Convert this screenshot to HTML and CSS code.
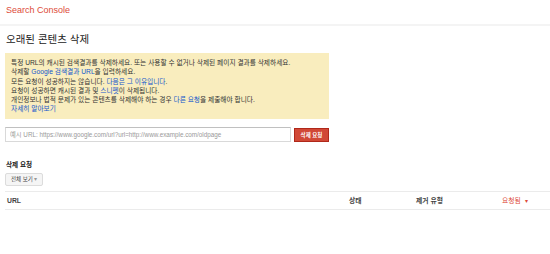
FILE: index.html
```html
<!DOCTYPE html>
<html lang="ko">
<head>
  <meta charset="UTF-8">
  <title>오래된 콘텐츠 삭제 - Search Console</title>
  <link rel="stylesheet" href="styles.css">
</head>
<body>
  <header class="top-bar">
    <span class="brand">Search Console</span>
  </header>

  <section class="page">
    <h1 class="page-title">오래된 콘텐츠 삭제</h1>

    <div class="notice">
      <p>특정 URL의 캐시된 검색결과를 삭제하세요. 또는 사용할 수 없거나 삭제된 페이지 결과를 삭제하세요.</p>
      <p>삭제할 <a href="#">Google 검색결과 URL</a>을 입력하세요.</p>
      <p>모든 요청이 성공하지는 않습니다. <a href="#">다음은 그 이유입니다</a>.</p>
      <p>요청이 성공하면 캐시된 결과 및 <a href="#">스니펫</a>이 삭제됩니다.</p>
      <p>개인정보나 법적 문제가 있는 콘텐츠를 삭제해야 하는 경우 <a href="#">다른 요청</a>을 제출해야 합니다.</p>
      <p><a href="#">자세히 알아보기</a></p>
    </div>

    <form class="request-form">
      <input type="text" class="url-input" placeholder="예시 URL: https://www.google.com/url?url=http://www.example.com/oldpage">
      <button type="submit" class="btn-red">삭제 요청</button>
    </form>

    <h2 class="section-title">삭제 요청</h2>
    <button type="button" class="btn-filter">전체 보기 <span class="caret">▾</span></button>

    <div class="table-head">
      <span class="col-url">URL</span>
      <span class="col-status">상태</span>
      <span class="col-type">제거 유형</span>
      <span class="col-date">요청됨 <span class="sort">▾</span></span>
    </div>
  </section>
</body>
</html>
```

FILE: styles.css
```css
/* Search Console - remove outdated content */
body {
  margin: 0;
  font-family: "Liberation Sans", Arial, "Noto Sans CJK KR", sans-serif;
  color: #222;
  background: #fff;
}

.top-bar {
  height: 24px;
  padding: 0 6px;
  display: flex;
  align-items: center;
  border-bottom: 2px solid #f4f4f4;
}

.brand {
  color: #dd4b39;
  font-size: 9px;
  margin-top: -4px;
}

.page {
  padding: 0 0 0 5px;
}

.page-title {
  font-size: 10.5px;
  font-weight: normal;
  margin: 6px 0 0 1px;
  line-height: 14px;
}

.notice {
  width: 312px;
  margin-top: 7px;
  padding: 5px 6px 5px 6px;
  background: #f9edbe;
  font-size: 6.7px;
  line-height: 9.3px;
  color: #333;
}

.notice p {
  margin: 0;
}

.notice a {
  color: #1155cc;
  text-decoration: none;
}

.request-form {
  display: flex;
  margin-top: 8px;
  gap: 3px;
}

.url-input {
  width: 286px;
  height: 15px;
  padding: 0 4px;
  box-sizing: border-box;
  border: 1px solid #d9d9d9;
  border-top-color: #c0c0c0;
  font-family: inherit;
  font-size: 6.3px;
  color: #333;
}

.url-input::placeholder {
  color: #999;
}

.btn-red {
  width: 35px;
  height: 14px;
  margin-top: 1px;
  padding: 0;
  border: 1px solid #b0281a;
  background: #d14836;
  color: #fff;
  font-family: inherit;
  font-size: 5.5px;
  font-weight: bold;
}

.section-title {
  font-size: 6.6px;
  font-weight: bold;
  margin: 18px 0 0 1px;
  line-height: 9px;
}

.btn-filter {
  display: block;
  margin-top: 4px;
  height: 13px;
  padding: 0 5px;
  border: 1px solid #dcdcdc;
  border-radius: 2px;
  background: #f5f5f5;
  color: #444;
  font-family: inherit;
  font-size: 5.5px;
}

.btn-filter .caret {
  color: #999;
}

.table-head {
  display: flex;
  align-items: center;
  margin-top: 5px;
  height: 17px;
  border-top: 1px solid #ebebeb;
  border-bottom: 1px solid #ebebeb;
  font-size: 6.8px;
  font-weight: bold;
  color: #444;
}

.col-url {
  padding-left: 2px;
  flex: 1;
}

.col-status {
  width: 67px;
}

.col-type {
  width: 86px;
}

.col-date {
  width: 48px;
  color: #dd4b39;
  font-weight: normal;
}

.sort {
  font-size: 6px;
  margin-left: 2px;
}
```
